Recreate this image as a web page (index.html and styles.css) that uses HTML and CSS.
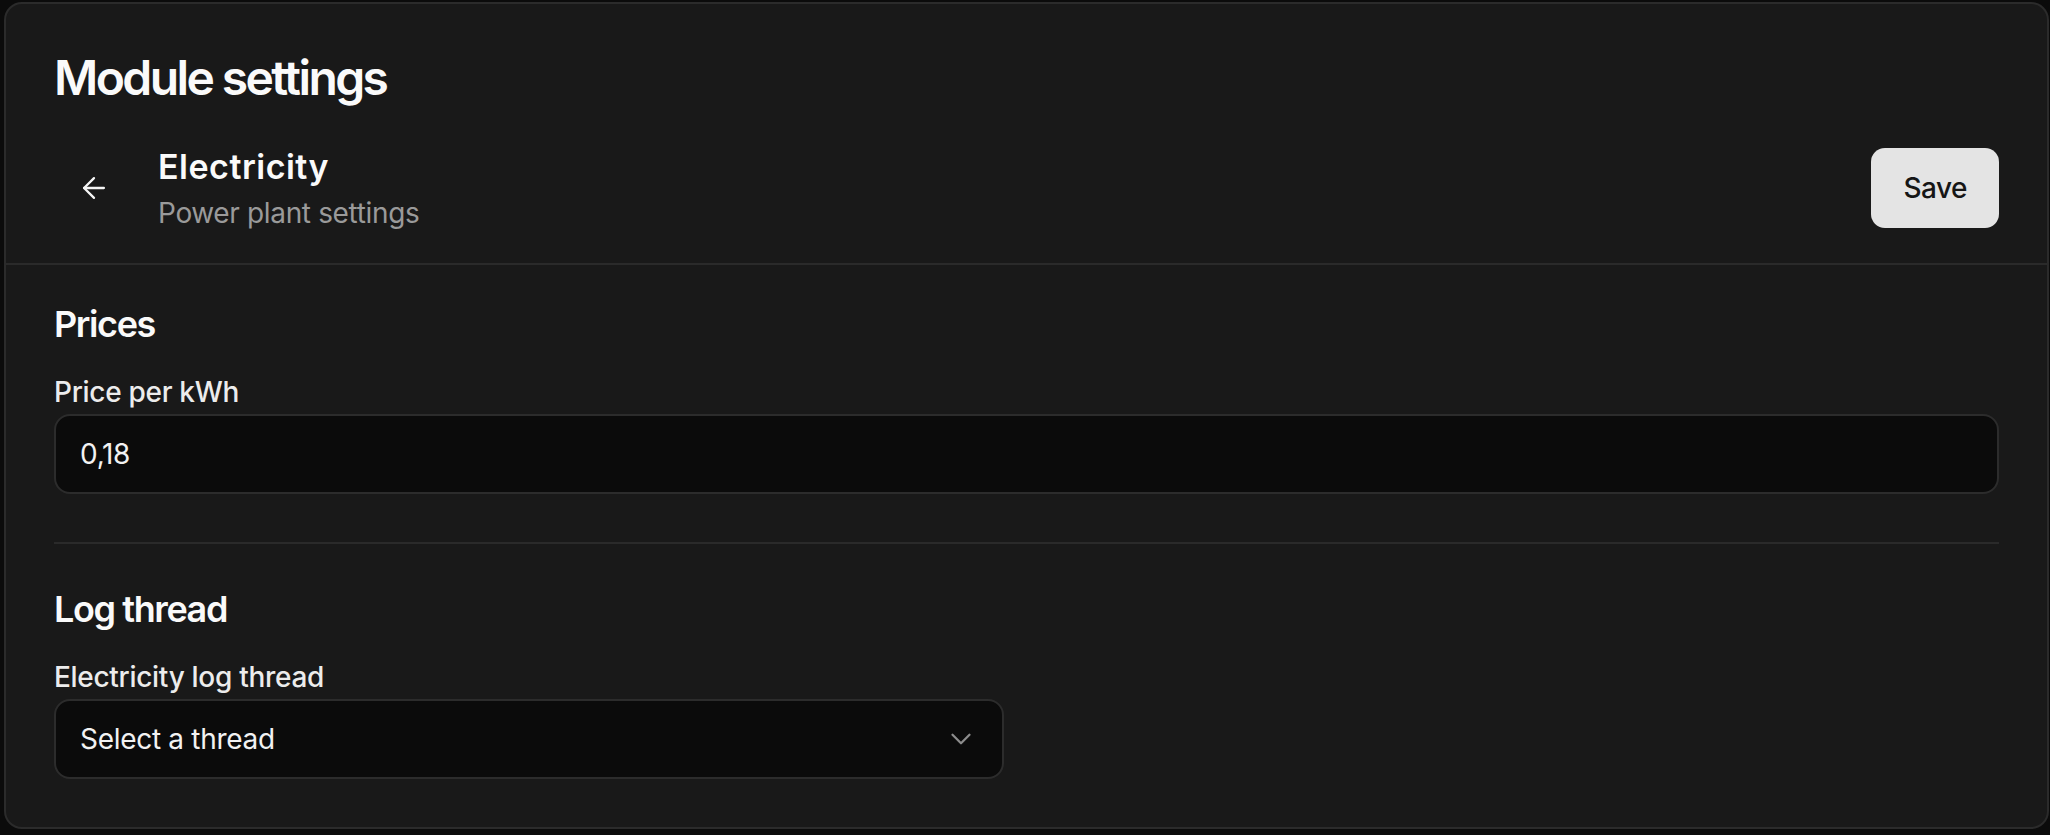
FILE: index.html
```html
<!DOCTYPE html>
<html lang="en">
<head>
  <meta charset="UTF-8">
  <meta name="viewport" content="width=device-width, initial-scale=1.0">
  <title>Module settings</title>
  <link rel="stylesheet" href="styles.css">
</head>
<body>
<div class="settings-card">
  <div class="settings-header">
    <h1 class="settings-title">Module settings</h1>
    <div class="module-bar">
      <button type="button" class="icon-button" aria-label="Back">
        <svg width="34" height="34" viewBox="0 0 24 24" fill="none" stroke="currentColor" stroke-width="1.6" stroke-linecap="round" stroke-linejoin="round">
          <path d="m12 19-7-7 7-7"/>
          <path d="M19 12H5"/>
        </svg>
      </button>
      <div class="module-info">
        <div class="module-name">Electricity</div>
        <div class="module-desc">Power plant settings</div>
      </div>
      <button type="button" class="save-button">Save</button>
    </div>
  </div>

  <div class="settings-body">
    <section class="settings-section">
      <h2 class="section-title">Prices</h2>
      <label class="field-label" for="price">Price per kWh</label>
      <input class="text-input" id="price" type="text" value="0,18">
    </section>

    <hr class="section-divider">

    <section class="settings-section">
      <h2 class="section-title">Log thread</h2>
      <label class="field-label" for="thread">Electricity log thread</label>
      <button type="button" class="select-trigger" id="thread">
        <span>Select a thread</span>
        <svg width="34" height="34" viewBox="0 0 24 24" fill="none" stroke="currentColor" stroke-width="1.6" stroke-linecap="round" stroke-linejoin="round">
          <path d="m6 9 6 6 6-6"/>
        </svg>
      </button>
    </section>
  </div>
</div>
</body>
</html>
```

FILE: styles.css
```css
* {
  margin: 0;
  padding: 0;
  box-sizing: border-box;
}

body {
  background: #0b0b0b;
  font-family: 'Inter', 'Noto Sans', sans-serif;
  color: #f2f2f2;
  padding: 2px 1px 0 4px;
}

.settings-card {
  height: 827px;
  background: #191919;
  border: 2px solid #2b2b2b;
  border-radius: 18px;
  overflow: hidden;
}

.settings-header {
  padding: 46px 48px 35px;
  border-bottom: 2px solid #2a2a2a;
}

.settings-title {
  font-size: 48px;
  line-height: 56px;
  font-weight: 600;
  letter-spacing: -2.6px;
  color: #fafafa;
  margin-bottom: 42px;
}

.module-bar {
  display: flex;
  align-items: center;
  height: 80px;
  gap: 24px;
}

.icon-button {
  width: 80px;
  height: 80px;
  border: none;
  border-radius: 12px;
  background: transparent;
  color: #f5f5f5;
  display: flex;
  align-items: center;
  justify-content: center;
  cursor: pointer;
}

.module-info {
  flex: 1;
  display: flex;
  flex-direction: column;
  gap: 2px;
}

.module-name {
  font-size: 34px;
  line-height: 48px;
  font-weight: 600;
  letter-spacing: 0.5px;
  color: #fafafa;
}

.module-desc {
  font-size: 28px;
  line-height: 40px;
  letter-spacing: -0.35px;
  color: #9a9a9a;
}

.save-button {
  height: 80px;
  padding: 0 32px;
  border: none;
  border-radius: 14px;
  background: #e4e4e4;
  color: #161616;
  font-family: inherit;
  font-size: 28px;
  font-weight: 500;
  letter-spacing: -0.5px;
  cursor: pointer;
}

.settings-body {
  padding: 31px 48px 48px;
}

.section-title {
  font-size: 36px;
  line-height: 56px;
  font-weight: 600;
  letter-spacing: -1.4px;
  color: #fafafa;
  margin-bottom: 20px;
}

.field-label {
  display: block;
  font-size: 28px;
  line-height: 40px;
  font-weight: 500;
  letter-spacing: -0.3px;
  color: #ececec;
  margin-bottom: 2px;
}

.text-input,
.select-trigger {
  height: 80px;
  background: #0b0b0b;
  border: 2px solid #2c2c2c;
  border-radius: 16px;
  color: #f2f2f2;
  font-family: inherit;
  font-size: 28px;
  letter-spacing: -0.3px;
  padding: 0 24px;
}

.text-input {
  width: 100%;
  outline: none;
}

.select-trigger {
  width: 950px;
  display: flex;
  align-items: center;
  justify-content: space-between;
  text-align: left;
  cursor: pointer;
}

.select-trigger svg {
  color: #8c8c8c;
}

.section-divider {
  border: none;
  border-top: 2px solid #2a2a2a;
  margin: 48px 0 37px;
}
```
